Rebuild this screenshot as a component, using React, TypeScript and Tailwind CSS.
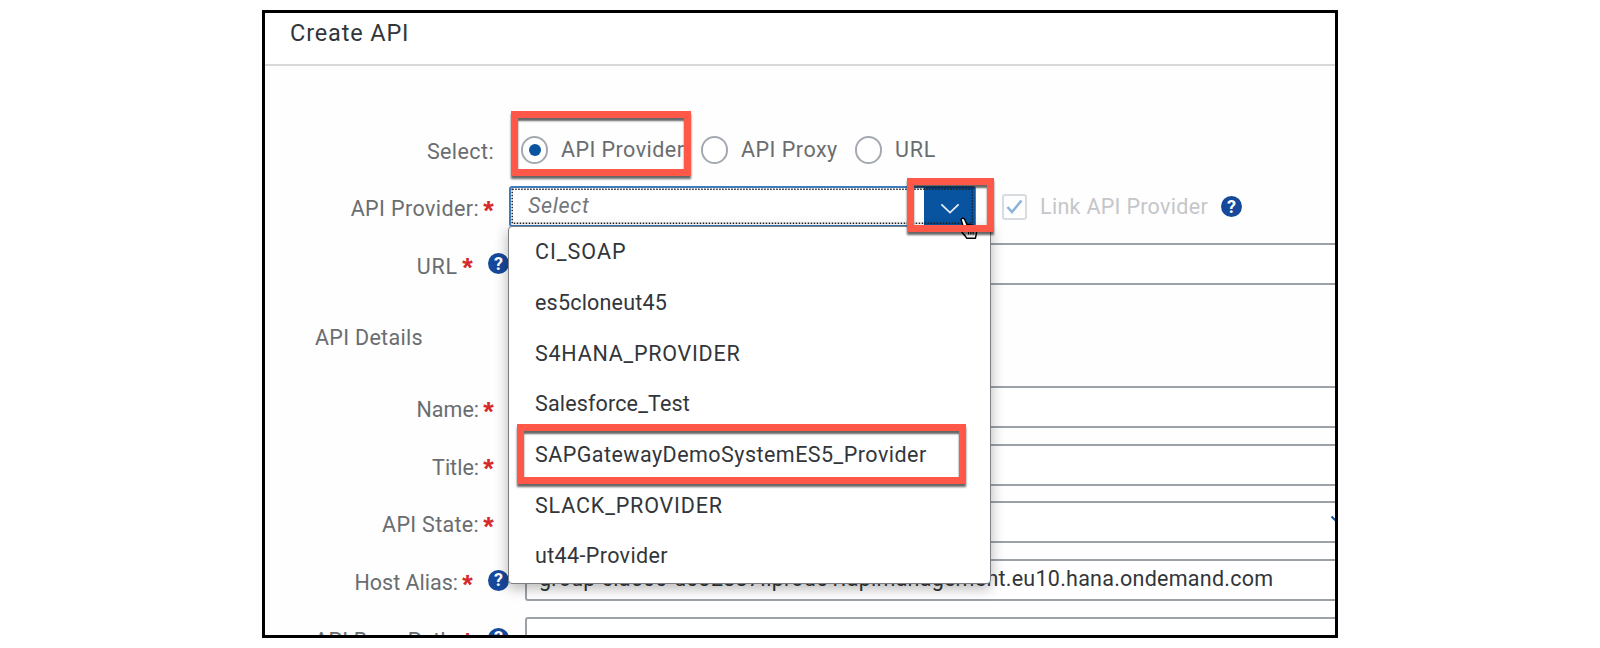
import React from "react";

const ITEMS = [
  { text: "CI_SOAP", cls: "tracking-[1px]" },
  { text: "es5cloneut45", cls: "tracking-[0.2px]" },
  { text: "S4HANA_PROVIDER", cls: "tracking-[0.75px]" },
  { text: "Salesforce_Test", cls: "tracking-[0.15px]" },
  { text: "SAPGatewayDemoSystemES5_Provider", cls: "tracking-[0.46px]" },
  { text: "SLACK_PROVIDER", cls: "tracking-[0.84px]" },
  { text: "ut44-Provider", cls: "tracking-[0.36px]" },
];

function Help() {
  return (
    <span className="flex h-[21px] w-[21px] shrink-0 items-center justify-center rounded-full bg-[#16489b] text-[18px] leading-none font-bold text-white">
      ?
    </span>
  );
}

function Label({ text, required = true, help = false, cls = "pt-[6px]" }: { text: string; required?: boolean; help?: boolean; cls?: string }) {
  return (
    <div className="flex w-[244px] shrink-0 items-center justify-end">
      <span className={"whitespace-nowrap text-[#6a6d70] " + cls}>{text}</span>
      {required && (
        <span className="ml-[4px] w-[11px] pt-[9px] text-center font-['Liberation_Sans',sans-serif] text-[27px] leading-[28px] font-bold text-[#d42a2a]">*</span>
      )}
      {help ? <span className="ml-[15px]"><Help /></span> : <span className="w-[15px] shrink-0" />}
    </div>
  );
}

function Field({ children }: { children?: React.ReactNode }) {
  return (
    <div className="ml-[16px] flex h-[42px] w-[900px] shrink-0 items-center rounded-[3px] border-2 border-[#9ca1a8] bg-white pl-3 text-[#32363a]">
      {children}
    </div>
  );
}

function Radio({ checked = false }: { checked?: boolean }) {
  return (
    <span className="flex h-[28px] w-[27px] shrink-0 items-center justify-center rounded-full border-2 border-[#a4a9b1] bg-white">
      {checked && <span className="h-[12px] w-[12px] rounded-full bg-[#0854a0]" />}
    </span>
  );
}

const RED = "pointer-events-none absolute border-[7px] border-[#ff5748] shadow-[0_3px_2px_rgba(0,0,0,0.6),inset_0_3px_2px_rgba(0,0,0,0.6)] ";

export default function App() {
  return (
    <div className="h-[648px] w-[1600px] overflow-hidden bg-white pt-[10px] pl-[262px] font-[Roboto,sans-serif] text-[21.5px] leading-[26px]">
      <div className="relative flex h-[628px] w-[1076px] flex-col overflow-hidden border-3 border-black bg-white">
        <header className="flex h-[53px] shrink-0 items-center border-b-2 border-[#d9d9d9] pb-[12px] pl-[25px] text-[23.5px] tracking-[0.85px] text-[#32363a] shadow-[0_1px_3px_rgba(0,0,0,0.12)]">
          <h1>Create API</h1>
        </header>
        <main className="flex flex-col bg-[#fefefe] pt-[55px]">
          <div className="flex h-[57px] shrink-0 items-center">
            <Label text="Select:" required={false} cls="pt-1 tracking-[0.4px]" />
            <div className="flex items-center pl-[12px] text-[#6a6d70]">
              <Radio checked />
              <span className="w-[153px] pl-[13px] tracking-[0.45px]">API Provider</span>
              <Radio />
              <span className="w-[127px] pl-[13px] tracking-[0.5px]">API Proxy</span>
              <Radio />
              <span className="pl-[13px] tracking-[0.8px]">URL</span>
            </div>
          </div>
          <div className="flex h-[57px] shrink-0 items-center">
            <Label text="API Provider:" cls="pt-1 tracking-[0.4px]" />
            <div className="relative flex h-[41px] w-[467px] shrink-0 rounded-[3px] border-2 border-[#3f7cbd] bg-white">
              <span className="flex-1 pt-[5px] pl-[17px] tracking-[0.7px] text-[#74777a] italic">Select</span>
              <span className="-my-px -mr-px flex w-[51px] items-center justify-center bg-[#0854a0]">
                <svg className="mt-1" width="20" height="11" viewBox="0 0 22 12" fill="none" stroke="#e4edf6" strokeWidth="2"><path d="M1.5 1.5L11 10.5L20.5 1.5" /></svg>
              </span>
              <svg className="absolute inset-0" width="463" height="37" fill="none" stroke="#222" strokeWidth="1.5" strokeDasharray="1.5 1.5"><rect x="1.2" y="1.2" width="460" height="34" /></svg>
            </div>
            <span className="ml-[26px] flex h-[26px] w-[25px] items-center justify-center rounded-[3px] border-2 border-[#d8dbdf]">
              <svg width="17" height="16" viewBox="0 0 17 16" fill="none" stroke="#8fb4da" strokeWidth="2.6"><path d="M1.5 8L6 13L15.5 1.5" /></svg>
            </span>
            <span className="w-[183px] pl-[13px] tracking-[0.3px] text-[#c5c6c8]">Link API Provider</span>
            <span className="ml-[11px]"><Help /></span>
          </div>
          <div className="flex h-[57px] shrink-0 items-center"><Label text="URL" help cls="pt-[6px] tracking-[0.8px]" /><Field /></div>
          <div className="flex h-[86px] shrink-0 items-center pt-[6px] pl-[50px] tracking-[0.3px] text-[#6a6d70]"><h2>API Details</h2></div>
          <div className="flex h-[58px] shrink-0 items-center"><Label text="Name:" /><Field /></div>
          <div className="flex h-[57px] shrink-0 items-center"><Label text="Title:" /><Field /></div>
          <div className="flex h-[58px] shrink-0 items-center">
            <Label text="API State:" cls="pt-[6px] tracking-[0.3px]" />
            <Field><svg className="mb-[2px] ml-[791px] shrink-0" width="22" height="12" viewBox="0 0 22 12" fill="none" stroke="#0854a0" strokeWidth="2"><path d="M1.5 1.5L11 10.5L20.5 1.5" /></svg></Field>
          </div>
          <div className="flex h-[58px] shrink-0 items-center">
            <Label text="Host Alias:" help />
            <Field><span className="-mt-[2px] tracking-[0.25px]">group-cla500-d032887.iprod01.apimanagement.eu10.hana.ondemand.com</span></Field>
          </div>
          <div className="flex h-[58px] shrink-0 items-center"><Label text="API Base Path:" help cls="pt-[6px] tracking-[0.2px]" /><Field /></div>
        </main>

        <ul className="absolute top-[213px] left-[243px] h-[358px] w-[483px] rounded-[4px] border border-[#7b7e82] bg-white pl-[26px] text-[#32363a] shadow-[0_4px_14px_rgba(0,0,0,0.3)]">
          {ITEMS.map((i) => (
            <li key={i.text} className="flex h-[50.7px] items-center whitespace-nowrap"><span className={i.cls}>{i.text}</span></li>
          ))}
        </ul>

        <div className={RED + "top-[98px] left-[246px] h-[65px] w-[180px]"} />
        <svg className="absolute top-[204px] left-[694px]" width="20" height="24" viewBox="0 0 21 26" fill="#fff" stroke="#000" strokeWidth="1.6" strokeLinejoin="round">
          <path d="M2 3C2 1 5 0.5 6 3L8.5 9C10 7.500 11.500 8 12 9.500C13.500 8 15 9 15.500 10.500C17 9.500 18.500 11 18.800 13C19.200 17 18 20 17.500 23H8C6 19 2 16.500 1.500 14.500C2 12.500 4 13 5.500 14.500Z" />
          <path d="M10 14V19M12.500 14V19M15 14V19" strokeWidth="1.200" />
        </svg>
        <div className={RED + "top-[165px] left-[642px] h-[54px] w-[87px]"} />
        <div className={RED + "top-[411px] left-[252px] h-[60px] w-[449px]"} />
      </div>
    </div>
  );
}
